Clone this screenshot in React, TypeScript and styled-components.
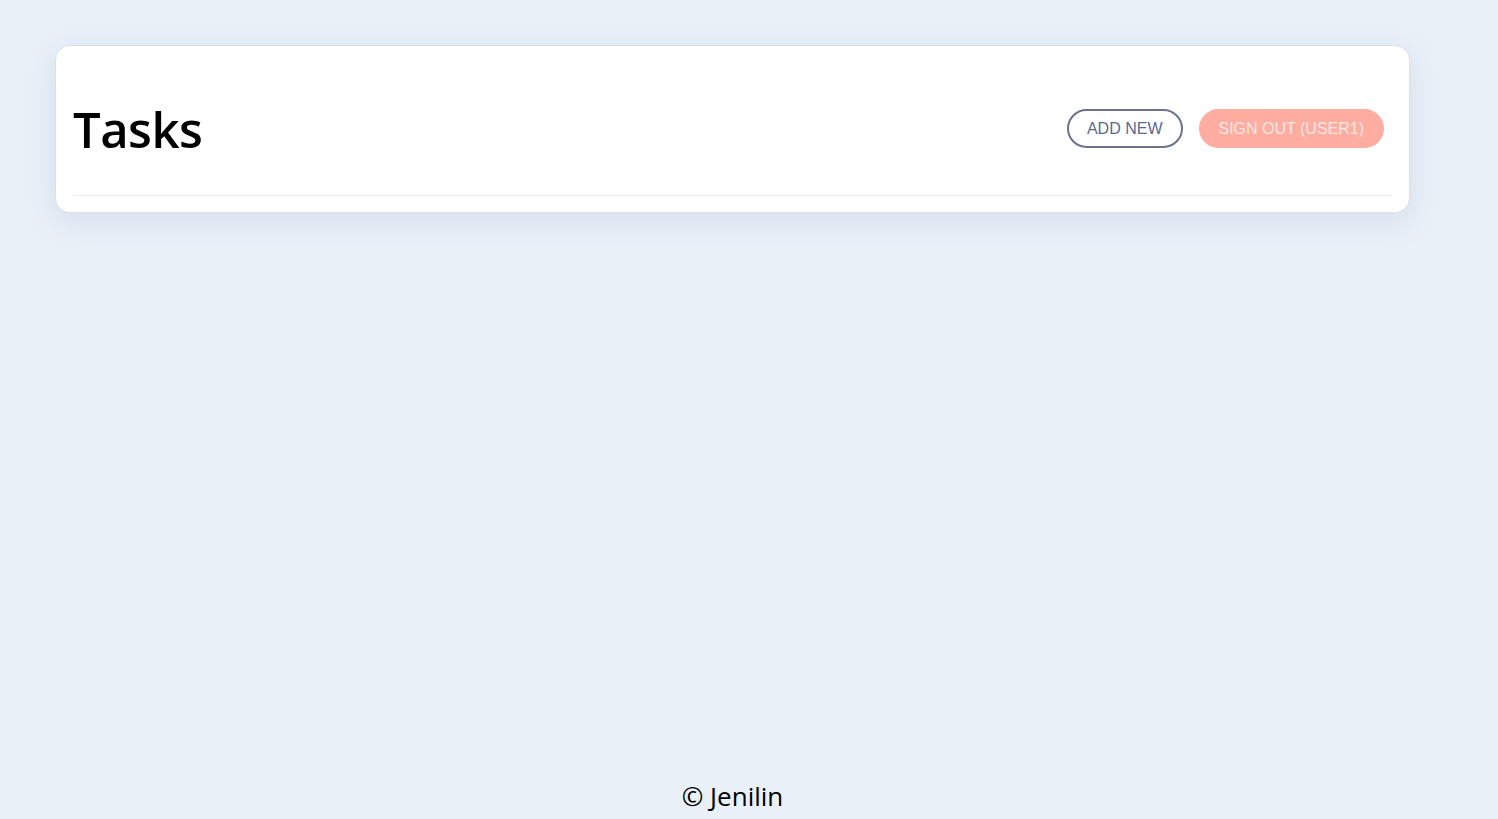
import React from "react";
import styled, { createGlobalStyle } from "styled-components";

const GlobalStyle = createGlobalStyle`
  html, body {
    margin: 0;
    padding: 0;
    background: #e9f0f8;
  }
  body {
    font-family: "Open Sans", "DejaVu Sans", sans-serif;
    color: #000;
  }
`;

const Page = styled.div`
  min-height: 100vh;
  display: flex;
  flex-direction: column;
  box-sizing: border-box;
  padding: 45px 88px 0 55px;
`;

const Main = styled.main`
  flex: 1;
`;

const Card = styled.section`
  background: #fff;
  border: 1px solid #dae1e9;
  border-radius: 15px;
  box-shadow: 0 8px 30px rgba(120, 150, 185, 0.18);
  padding: 0 17px 16px 17px;
`;

const Header = styled.header`
  display: flex;
  align-items: center;
  justify-content: space-between;
  box-sizing: border-box;
  height: 150px;
  padding-top: 16px;
  border-bottom: 1px solid #ececf0;
`;

const Title = styled.h1`
  margin: 0;
  font-family: "Open Sans", "DejaVu Sans", sans-serif;
  font-weight: 600;
  font-size: 49px;
  letter-spacing: -0.5px;
`;

const Actions = styled.div`
  display: flex;
  gap: 16px;
  margin-right: 8px;
`;

const PillButton = styled.button<{ $variant: "outline" | "danger" }>`
  font-family: "Liberation Sans", Arial, sans-serif;
  font-size: 16px;
  height: 39px;
  border-radius: 20px;
  padding: 0 18px;
  cursor: pointer;
  box-sizing: border-box;
  border: 2px solid
    ${(p) => (p.$variant === "outline" ? "#6c7290" : "#ffaca1")};
  background: ${(p) => (p.$variant === "outline" ? "#fff" : "#ffaca1")};
  color: ${(p) => (p.$variant === "outline" ? "#5a6890" : "#ffe8e4")};
`;

const Footer = styled.footer`
  text-align: center;
  font-family: "Open Sans", "DejaVu Sans", sans-serif;
  font-size: 26px;
  padding: 0 0 5px;
`;

export default function App() {
  return (
    <>
      <GlobalStyle />
      <Page>
        <Main>
          <Card>
            <Header>
              <Title>Tasks</Title>
              <Actions>
                <PillButton $variant="outline">ADD NEW</PillButton>
                <PillButton $variant="danger">SIGN OUT (USER1)</PillButton>
              </Actions>
            </Header>
          </Card>
        </Main>
        <Footer>© Jenilin</Footer>
      </Page>
    </>
  );
}
